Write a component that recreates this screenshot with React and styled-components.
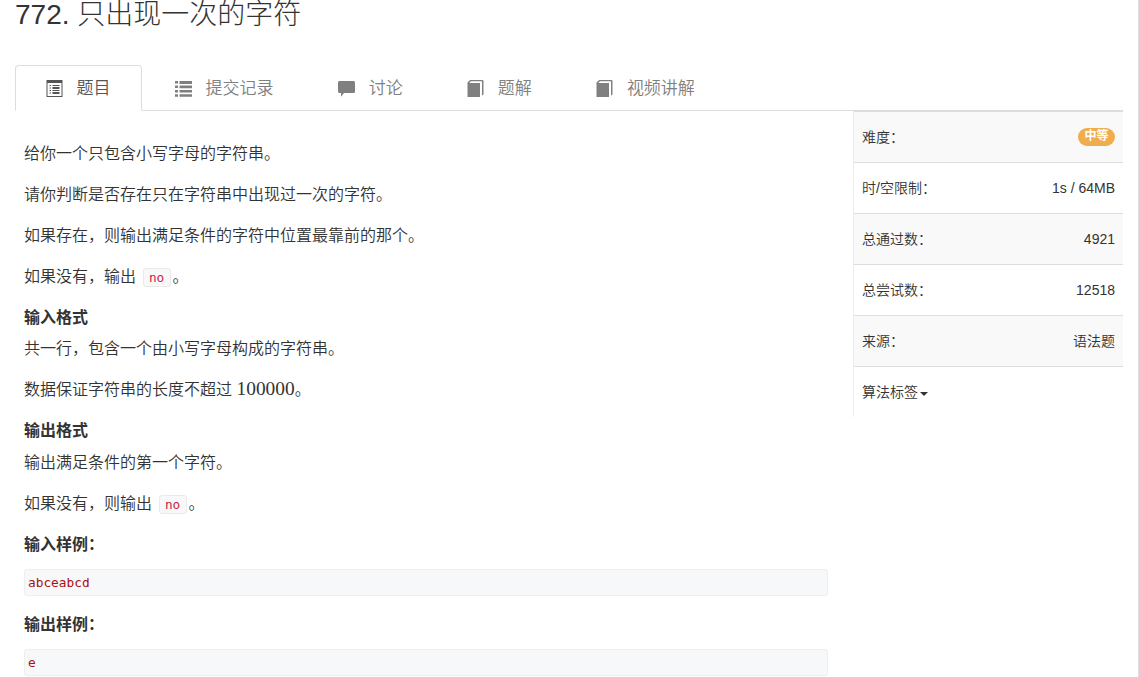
/* eslint-disable react/prop-types */
import styled, { createGlobalStyle } from 'styled-components';

const GlobalStyle = createGlobalStyle`
  * {
    box-sizing: border-box;
  }

  body {
    margin: 0;
    overflow: hidden;
    background: #fff;
    color: #333;
    font-family: 'Liberation Sans', 'Noto Sans CJK SC', sans-serif;
    font-size: 14px;
    line-height: 20px;
  }
`;

const Page = styled.div`
  width: 1139px;
  height: 677px;
  padding: 0 15px;
  border-right: 1px solid #ddd;
  overflow: hidden;
`;

const Title = styled.h1`
  height: 65px;
  margin: 0;
  font-size: 28px;
  font-weight: 300;
  line-height: 30px;
`;

const Tabs = styled.ul`
  display: flex;
  column-gap: 2px;
  height: 46px;
  margin: 0;
  padding: 0;
  list-style: none;
  border-bottom: 1px solid #ddd;
`;

const Tab = styled.li`
  display: flex;
  align-items: center;
  column-gap: 14px;
  height: 46px;
  padding: 2px 30.6px 0 29.5px;
  font-size: 17px;
  font-weight: 350;
  white-space: nowrap;
  color: ${({ $active }) => ($active ? '#555' : '#808080')};
  border: 1px solid ${({ $active }) => ($active ? '#ddd' : 'transparent')};
  border-bottom-color: ${({ $active }) => ($active ? '#fff' : 'transparent')};
  border-radius: 4px 4px 0 0;

  svg {
    flex: none;
    width: 17px;
    height: 17px;
    margin-top: -2px;
  }
`;

const Content = styled.div`
  display: flex;
  align-items: flex-start;
`;

const Article = styled.div`
  width: 838px;
  padding: 28px 25px 0 9px;
  font-family: 'Noto Sans CJK SC', sans-serif;
  font-size: 16px;
  font-weight: 350;
`;

const Paragraph = styled.p`
  height: 26px;
  margin: 0 0 15px;
  line-height: 26px;
`;

const Heading = styled.h4`
  height: 26px;
  margin: 0 0 ${({ $gap = 5 }) => $gap}px;
  font-size: 16px;
  font-weight: 700;
  line-height: 26px;
`;

const InlineCode = styled.code`
  display: inline-block;
  height: 19px;
  margin: 0 2px 0 3px;
  padding: 0 5.3px;
  font-family: 'DejaVu Sans Mono', monospace;
  font-size: 12.8px;
  font-weight: 400;
  line-height: 18px;
  color: #c7254e;
  background: #f8f8f8;
  border: 1px solid #eaeaea;
  border-radius: 3px;
`;

const MathText = styled.span`
  margin-left: 1px;
  font-family: 'Liberation Serif', serif;
  font-size: 19.36px;
  font-weight: 400;
  line-height: 1;
`;

const Sample = styled.pre`
  height: 27px;
  margin: 0 0 14px;
  padding: 0 3px;
  font-family: 'DejaVu Sans Mono', monospace;
  font-size: 12.8px;
  font-weight: 400;
  line-height: 25px;
  color: #a11;
  background: #f6f8fa;
  border: 1px solid #eee;
  border-radius: 3px;
`;

const Sidebar = styled.div`
  width: 270px;
  border-left: 1px solid #eee;
`;

const InfoRow = styled.div`
  display: flex;
  justify-content: space-between;
  align-items: center;
  height: 51px;
  padding: 0 8px;
  font-weight: 350;
  border-top: 1px solid #ddd;
  background: ${({ $striped }) => ($striped ? '#f9f9f9' : '#fff')};

  &:last-child {
    justify-content: flex-start;
  }
`;

const Badge = styled.span`
  height: 18px;
  margin-top: -1px;
  padding: 0 6.5px;
  font-size: 12px;
  font-weight: 700;
  line-height: 16px;
  color: #fff;
  background: #f0ad4e;
  border-radius: 9px;
`;

const Caret = styled.span`
  margin: 3px 0 0 2px;
  border-top: 4px solid #333;
  border-right: 4px solid transparent;
  border-left: 4px solid transparent;
`;

const ListAltIcon = () => (
  <svg viewBox="0 0 17 17" fill="currentColor">
    <path
      fillRule="evenodd"
      d="M.5 0h16v17H.5zM1.5 3v13h14V3z"
    />
    <path d="M3.5 5H5v1H3.5zM6.5 5h7v1h-7zM3.5 7.5H5v1H3.5zM6.5 7h7v2h-7zM3.5 10H5v1H3.5zM6.5 10h7v1h-7zM3.5 12.5H5v1H3.5zM6.5 12h7v2h-7z" />
  </svg>
);

const ListIcon = () => (
  <svg viewBox="0 0 17 17" fill="currentColor">
    <path d="M0 1h3v2.5H0zM4.5 1H17v3H4.5zM0 5.5h3V8H0zM4.5 5.5H17v2.7H4.5zM0 10h3v2.5H0zM4.5 10H17v2.5H4.5zM0 14.2h3v2.6H0zM4.5 14.2H17v2.6H4.5z" />
  </svg>
);

const CommentIcon = () => (
  <svg viewBox="0 0 17 17" fill="currentColor">
    <path d="M1 1h15l1 1v10l-1 1H6l-3 3.7V13H1l-1-1V2z" />
  </svg>
);

const BookIcon = () => (
  <svg viewBox="0 0 17 17" fill="currentColor">
    <path d="M.5 3H13v14H.5z" />
    <path d="M.5 3.4V2.5L3.1 0H16l.5 1v13.5l-1.5 1V1.3H3.9L1.9 3.4z" />
  </svg>
);

const tabs = [
  { label: '题目', Icon: ListAltIcon, active: true },
  { label: '提交记录', Icon: ListIcon },
  { label: '讨论', Icon: CommentIcon },
  { label: '题解', Icon: BookIcon },
  { label: '视频讲解', Icon: BookIcon },
];

const info = [
  { label: '难度：', value: '中等', badge: true },
  { label: '时/空限制：', value: '1s / 64MB' },
  { label: '总通过数：', value: '4921' },
  { label: '总尝试数：', value: '12518' },
  { label: '来源：', value: '语法题' },
];

const Problem = () => {
  return (
    <Article>
      <Paragraph>给你一个只包含小写字母的字符串。</Paragraph>
      <Paragraph>请你判断是否存在只在字符串中出现过一次的字符。</Paragraph>
      <Paragraph>如果存在，则输出满足条件的字符中位置最靠前的那个。</Paragraph>
      <Paragraph>
        如果没有，输出 <InlineCode>no</InlineCode>。
      </Paragraph>
      <Heading>输入格式</Heading>
      <Paragraph>共一行，包含一个由小写字母构成的字符串。</Paragraph>
      <Paragraph>
        数据保证字符串的长度不超过 <MathText>100000</MathText>。
      </Paragraph>
      <Heading $gap={6}>输出格式</Heading>
      <Paragraph>输出满足条件的第一个字符。</Paragraph>
      <Paragraph>
        如果没有，则输出 <InlineCode>no</InlineCode>。
      </Paragraph>
      <Heading $gap={13}>输入样例：</Heading>
      <Sample>abceabcd</Sample>
      <Heading $gap={13}>输出样例：</Heading>
      <Sample>e</Sample>
    </Article>
  );
};

const App = () => {
  return (
    <>
      <GlobalStyle />
      <Page>
        <Title>772. 只出现一次的字符</Title>
        <Tabs>
          {tabs.map(({ label, Icon, active }) => (
            <Tab key={label} $active={active}>
              <Icon />
              {label}
            </Tab>
          ))}
        </Tabs>
        <Content>
          <Problem />
          <Sidebar>
            {info.map(({ label, value, badge }, index) => (
              <InfoRow key={label} $striped={index % 2 === 0}>
                <span>{label}</span>
                {badge ? <Badge>{value}</Badge> : <span>{value}</span>}
              </InfoRow>
            ))}
            <InfoRow>
              <span>算法标签</span>
              <Caret />
            </InfoRow>
          </Sidebar>
        </Content>
      </Page>
    </>
  );
};

export default App;
